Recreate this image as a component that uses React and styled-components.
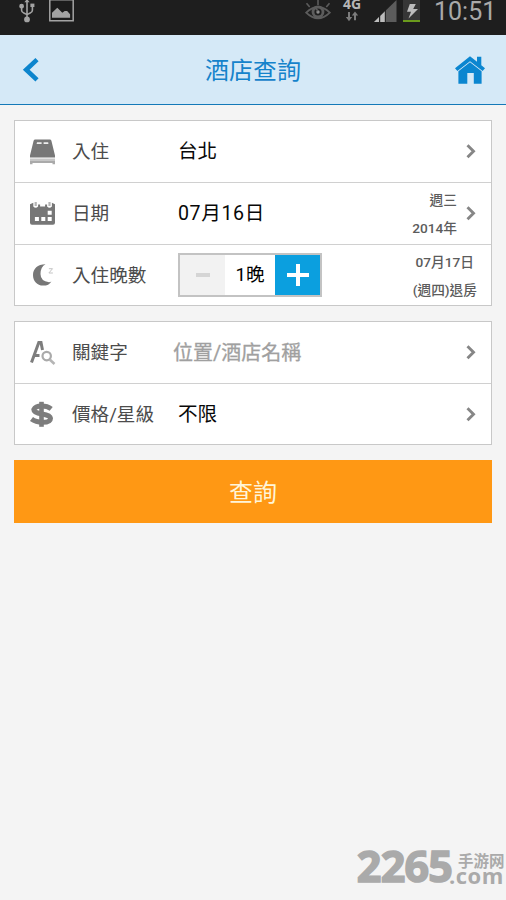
import React from "react";
import styled, { createGlobalStyle } from "styled-components";

const App = () => {
  return (
    <Page>
      <GlobalStyle />
      <StatusBar>
        <Notifications>
          <UsbIcon />
          <PictureIcon />
        </Notifications>
        <System>
          <EyeIcon />
          <Network>
            <span>4G</span>
            <ArrowsIcon />
          </Network>
          <Meters>
            <SignalIcon />
            <BatteryIcon />
          </Meters>
          <Clock>10:51</Clock>
        </System>
      </StatusBar>
      <Header>
        <BackIcon />
        <h1>酒店查詢</h1>
        <HomeIcon />
      </Header>
      <Form>
        <Card>
          <Row>
            <BedIcon />
            <Label>入住</Label>
            <Value>台北</Value>
            <Chevron />
          </Row>
          <Row>
            <CalendarIcon />
            <Label>日期</Label>
            <Value $date>07月16日</Value>
            <Note>
              <p>週三</p>
              <p>2014年</p>
            </Note>
            <Chevron />
          </Row>
          <Row>
            <MoonIcon />
            <Label>入住晚數</Label>
            <Stepper>
              <StepButton>
                <MinusIcon />
              </StepButton>
              <Count>1晚</Count>
              <StepButton $active>
                <PlusIcon />
              </StepButton>
            </Stepper>
            <Note $last>
              <p>07月17日</p>
              <p>(週四)退房</p>
            </Note>
          </Row>
        </Card>
        <Card>
          <Row>
            <KeywordIcon />
            <Label>關鍵字</Label>
            <Value $placeholder>位置/酒店名稱</Value>
            <Chevron />
          </Row>
          <Row>
            <DollarIcon />
            <Label>價格/星級</Label>
            <Value>不限</Value>
            <Chevron />
          </Row>
        </Card>
        <Submit>查詢</Submit>
      </Form>
      <Watermark>
        <Digits>2265</Digits>
        <Site>
          <span>手游网</span>
          <b>.com</b>
        </Site>
      </Watermark>
    </Page>
  );
};

const UsbIcon = () => (
  <svg width="16" height="24" viewBox="0 0 16 24" fill="none" stroke="#a3a3a3" strokeWidth="1.6">
    <path d="M8 0V19M2.6 7v3.2q0 2 2.2 2.8L8 14.6M13.4 6v4.2q0 2-2.2 2.8L8 14.6" />
    <circle cx="8" cy="19.4" r="2.1" fill="#a3a3a3" />
    <circle cx="2.6" cy="6.2" r="1.6" fill="#a3a3a3" />
    <path d="M11.4 3.6h4v3.4h-4z" fill="#a3a3a3" stroke="none" />
    <path d="M5.4 2.2 8-1l2.6 3.2z" fill="#a3a3a3" stroke="none" />
  </svg>
);

const PictureIcon = () => (
  <svg width="25" height="24" viewBox="0 0 25 24">
    <path d="M.8-.2h23.4v21H.8z" fill="#1c1c1c" stroke="#a3a3a3" strokeWidth="1.5" />
    <path d="M3 17.7v-5L8.3 7.8l5 5 2.4-1.8h2.4l3 3.2v3.5z" fill="#a3a3a3" />
  </svg>
);

const EyeIcon = () => (
  <svg width="26" height="24" viewBox="0 0 26 24" fill="none" stroke="#5c5c5c">
    <path d="M1.2 12.6Q13 1.4 24.8 12.6 13 24 1.2 12.6z" strokeWidth="1.8" />
    <circle cx="13" cy="12" r="5" strokeWidth="2.8" />
    <circle cx="13" cy="12" r="1.7" fill="#8a8a8a" stroke="none" />
    <path d="M13 11 10.5 8M13 0v5M1.5 3.2 4.7 7M24.5 3.2 21.3 7" strokeWidth="1.6" />
  </svg>
);

const ArrowsIcon = () => (
  <svg width="14" height="11" viewBox="0 0 14 11" fill="#7c7c7c">
    <path d="M3 1h2v5h2.2L4 10.2.8 6H3zM9 9.2V4.4H6.8L10 .4l3.2 4H11v4.8z" />
  </svg>
);

const SignalIcon = () => (
  <svg width="24" height="24" viewBox="0 0 24 24">
    <path d="M1 22 23.5 0v22z" fill="#5c5c5c" />
    <path d="M1 22l5-4.9V22zM7.2 22v-6l4.8-4.8V22z" fill="#bdbdbd" />
    <path d="M6.6 15v7M12.3 9v13" stroke="#1e1e1e" />
  </svg>
);

const BatteryIcon = () => (
  <svg width="17" height="24" viewBox="0 0 17 24">
    <path d="M0 0h17v20H0z" fill="#363636" />
    <path d="M0 20h17v2H0z" fill="#6a9a1c" />
    <path d="M6.8 4h6l-2.6 5H15L5.5 18.6 8 11.8H4z" fill="#bdbdbd" />
  </svg>
);

const BackIcon = () => (
  <svg width="18" height="26" viewBox="0 0 18 26" fill="none" stroke="#0d85cd" strokeWidth="4.6">
    <path d="M15 2.6 4.2 12.7 15 22.9" />
  </svg>
);

const HomeIcon = () => (
  <svg width="30" height="28" viewBox="0 0 30 28" fill="#0b86d0">
    <path d="M15 .3 22 5.8V.8h4.3v8.5L30 12.3 27.6 15 15 5.3 2.4 15 0 12.3z" />
    <path d="M15 6.3 26.6 15.2v12.6h-7.8V17h-6.500v10.800H3.400V15.200z" />
  </svg>
);

const BedIcon = () => (
  <svg width="28" height="28" viewBox="0 0 28 28">
    <path d="M6.2 1.5h14.6q1.3 0 1.6 1.3L26 17.5v2H1v-2L4.6 2.8Q5 1.5 6.2 1.5z" fill="#777" />
    <path d="M8 4.2h4.6v1.8H7.6zM14.6 4.2h4.6l.2 1.8h-4.8z" fill="#eee" />
    <path d="M1 20.5h25v2H1z" fill="#c6c6c6" />
    <path d="M1 22.5h25v3.7h-2.5V25h-20v1.2H1z" fill="#aaa" />
  </svg>
);

const CalendarIcon = () => (
  <svg width="28" height="28" viewBox="0 0 28 28">
    <path d="M1 4.2 4.3 2.8v3.7q2.4 2.6 4.8 0V4.5h2v2h5v-2h2v2q2.4 2.6 4.8 0V2.8L26 4.2v18.6q0 2-2 2H3q-2 0-2-2z" fill="#777" />
    <path d="M6.7 2v4M20.5 2v4" stroke="#b5b5b5" strokeWidth="2.2" />
    <path d="M18.7 10.7h4v4h-4zM5.900 17h4v4h-4zM12.300 17h4v4h-4zM18.700 17h4v4h-4z" fill="#fff" />
  </svg>
);

const MoonIcon = () => (
  <svg width="28" height="28" viewBox="0 0 28 28">
    <path d="M16.5 2.3Q11.500 5 11.500 12t8.500 8.300q1.500-.3 2.400-.9-2.400 4.200-8.300 4.200C8 23.600 4 19 4 13S8.500 2.300 16.500 2.300z" fill="#777" />
    <path d="M19.900 6.700h3.600l-3.600 4.300h4" fill="none" stroke="#c4c4c4" strokeWidth="1" />
  </svg>
);

const KeywordIcon = () => (
  <svg width="28" height="28" viewBox="0 0 28 28" fill="none">
    <path d="M2.5 23.5 9.8 3.5h2.2L13.5 11M5.5 16.5h5" stroke="#7d7d7d" strokeWidth="3" />
    <circle cx="17.7" cy="17.1" r="4.2" stroke="#aaa" strokeWidth="2.2" />
    <path d="m20.7 20.5 4.8 4.500" stroke="#b5b5b5" strokeWidth="2.6" />
  </svg>
);

const DollarIcon = () => (
  <svg width="28" height="28" viewBox="0 0 28 28" fill="none" stroke="#7d7d7d">
    <path d="M22.2 7.900Q18.500 5 12.500 5T4.800 8.600q0 3.200 8.200 4.400T21.500 17.200q0 4.100-8 4.100-6.800 0-11-3.200" strokeWidth="5" />
    <path d="M12.500.8v25" strokeWidth="4.600" />
  </svg>
);

const MinusIcon = () => (
  <svg width="14" height="4" viewBox="0 0 14 4">
    <path d="M0 0h14v4H0z" fill="#d5d5d5" />
  </svg>
);

const PlusIcon = () => (
  <svg width="22" height="24" viewBox="0 0 22 24">
    <path d="M0 12h22M11 1v22" stroke="#fff" strokeWidth="4" />
  </svg>
);

const Chevron = () => (
  <svg width="10" height="16" viewBox="0 0 10 16" fill="none" stroke="#868686" strokeWidth="2.9">
    <path d="m1.5 1.3 6 6-6 6" />
  </svg>
);

const GlobalStyle = createGlobalStyle`
  * {
    margin: 0;
    padding: 0;
    box-sizing: border-box;
  }
  body {
    background: #f4f4f4;
    font-family: Roboto, "Noto Sans CJK TC", sans-serif;
  }
  svg {
    display: block;
    flex-shrink: 0;
  }
`;
const Page = styled.div`
  position: relative;
  height: 900px;
  overflow: hidden;
  background: #f4f4f4;
`;
const StatusBar = styled.div`
  display: flex;
  justify-content: space-between;
  height: 35px;
  padding: 0 11px 0 19px;
  background: #1e1e1e;
`;
const Notifications = styled.div`
  display: flex;
  gap: 14px;
`;
const System = styled.div`
  display: flex;
`;
const Network = styled.div`
  display: flex;
  flex-direction: column;
  align-items: center;
  width: 18px;
  margin: -4px 12px 0 12px;
  color: #b5b5b5;
  span {
    font: bold 14px/15px "Open Sans", sans-serif;
  }
`;
const Meters = styled.div`
  display: flex;
  gap: 6px;
`;
const Clock = styled.div`
  width: 61px;
  margin-left: 14px;
  color: #a9a9a9;
  font-size: 25px;
  line-height: 24px;
  white-space: nowrap;
`;
const Header = styled.header`
  display: flex;
  justify-content: space-between;
  align-items: center;
  height: 70px;
  padding: 0 21px 0 22px;
  background: #d5e9f7;
  border-bottom: 1px solid #1479b8;
  h1 {
    padding: 4px 0 0 11px;
    color: #1583cb;
    font-size: 24px;
    font-weight: 400;
    line-height: 65px;
  }
`;
const Form = styled.main`
  display: flex;
  flex-direction: column;
  gap: 15px;
  padding: 15px 14px;
`;
const Card = styled.section`
  background: #fff;
  border: 1px solid #c8c8c8;
`;
const Row = styled.div`
  display: flex;
  align-items: center;
  height: 62px;
  padding: 0 15px 0 14px;
  &:first-child,
  &:last-child {
    height: 61px;
  }
  &:last-child {
    padding-top: 1px;
  }
  & + & {
    border-top: 1px solid #d0d0d0;
  }
`;
const Label = styled.div`
  width: 105px;
  padding-left: 15px;
  color: #4c4c4c;
  font-size: 18.6px;
  line-height: 28px;
  white-space: nowrap;
`;
const Value = styled.div`
  flex: 1;
  margin-left: ${(props) => (props.$placeholder ? "11px" : "16px")};
  color: ${(props) => (props.$placeholder ? "#a0a0a0" : "#080808")};
  font-size: ${(props) => (props.$placeholder ? "20px" : "19.6px")};
  letter-spacing: ${(props) => (props.$date ? "0.6px" : "0")};
  line-height: 28px;
  -webkit-text-stroke: ${(props) => (props.$placeholder ? "0.3px" : "0")};
`;
const Note = styled.div`
  margin-right: ${(props) => (props.$last ? "-1px" : "9px")};
  color: #5c5c5c;
  font-size: 13.7px;
  font-weight: 500;
  line-height: 28px;
  text-align: right;
  p:first-child {
    padding-right: ${(props) => (props.$last ? "3px" : "0")};
  }
`;
const Stepper = styled.div`
  display: flex;
  width: 144px;
  height: 44px;
  margin: 0 auto 2px 16px;
  border: 2px solid #c3c3c3;
`;
const StepButton = styled.div`
  display: flex;
  align-items: center;
  justify-content: center;
  width: 45px;
  background: ${(props) => (props.$active ? "#0b9fdf" : "#f2f2f2")};
`;
const Count = styled.div`
  flex: 1;
  font-size: 18.6px;
  line-height: 41px;
  text-align: center;
`;
const Submit = styled.button`
  height: 63px;
  padding-bottom: 2px;
  border: 0;
  background: #ff9814;
  color: #fff5d8;
  font-family: inherit;
  font-size: 24px;
`;
const Watermark = styled.div`
  position: absolute;
  right: 1px;
  bottom: 18px;
  display: flex;
  align-items: flex-end;
  color: #aaa;
`;
const Digits = styled.div`
  margin: 0 -3px -6px 0;
  font: bold 43px/44px "Open Sans", sans-serif;
  letter-spacing: -0.8px;
  -webkit-text-stroke: 1.6px #aaa;
`;
const Site = styled.div`
  display: flex;
  flex-direction: column;
  width: 56px;
  span {
    padding-left: 9px;
    font: bold 15.5px/16px "Noto Sans CJK SC", sans-serif;
    white-space: nowrap;
  }
  b {
    font: bold 22px/14px "Open Sans", sans-serif;
    letter-spacing: 0.5px;
  }
`;

export default App;
